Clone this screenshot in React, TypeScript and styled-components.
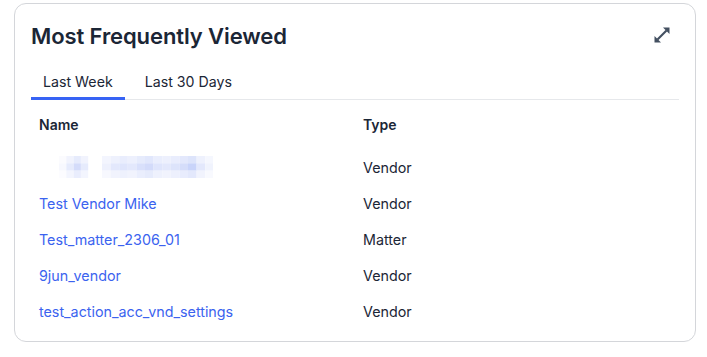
import React, { FC, useState } from 'react'
import styled, { createGlobalStyle } from 'styled-components'

const GlobalStyle = createGlobalStyle`
  html, body {
    margin: 0;
    padding: 0;
    background: #ffffff;
    font-family: Inter, "Noto Sans", Arial, sans-serif;
  }
`

const palette = {
  text: '#1b2636',
  link: '#3b63ef',
  border: '#d4d6da',
  divider: '#e6e8eb',
  accent: '#3763f4',
  icon: '#445061',
}

const Page = styled.div`
  padding: 3px 0 0 14px;
`

const Card = styled.section`
  box-sizing: border-box;
  width: 682px;
  height: 339px;
  border: 1px solid ${palette.border};
  border-radius: 12px;
  padding: 16px 16px 0 16px;
  background: #fff;
`

const Header = styled.div`
  display: flex;
  justify-content: space-between;
  align-items: center;
  height: 32px;
`

const Title = styled.h2`
  margin: 0;
  font-size: 22px;
  font-weight: 600;
  color: ${palette.text};
  letter-spacing: -0.1px;
`

const ExpandButton = styled.button`
  display: flex;
  align-items: center;
  justify-content: center;
  width: 24px;
  height: 24px;
  margin: 0 5px 3px 0;
  padding: 0;
  border: 0;
  background: transparent;
  cursor: pointer;
`

const TabList = styled.div`
  display: flex;
  gap: 8px;
  margin-top: 13px;
  border-bottom: 1px solid ${palette.divider};
`

const Tab = styled.button<{ $active: boolean }>`
  padding: 0 12px;
  height: 35px;
  border: 0;
  border-bottom: 3px solid ${(p) => (p.$active ? palette.accent : 'transparent')};
  margin-bottom: -1px;
  background: transparent;
  font-family: inherit;
  font-size: 14.2px;
  font-weight: 400;
  color: ${palette.text};
  cursor: pointer;
`

const Table = styled.table`
  width: 100%;
  border-collapse: collapse;
  table-layout: fixed;
`

const HeadCell = styled.th`
  height: 49px;
  padding: 0 8px;
  text-align: left;
  font-size: 14px;
  font-weight: 600;
  color: ${palette.text};
`

const Cell = styled.td`
  height: 36px;
  padding: 0 8px;
  font-size: 14.3px;
  color: ${palette.text};
`

const ItemLink = styled.a`
  color: ${palette.link};
  text-decoration: none;
`

const Mosaic = styled.svg`
  display: block;
  margin-left: 20px;
`

const ExpandIcon: FC = () => (
  <svg width="16" height="16" viewBox="0 0 16 16" fill={palette.icon}>
    <polygon points="9,0.5 15.5,0.5 15.5,7" />
    <polygon points="0.5,9 0.5,15.5 7,15.5" />
    <line x1="3.5" y1="12.5" x2="12.5" y2="3.5" stroke={palette.icon} strokeWidth="2.2" />
  </svg>
)

// pixelated (redacted) name in the first row
const mosaicShades = [
  ['#fbfbfe', '#f1f3fd', '#e6ebfc', '#f1f3fd', null, '#f3f5fe', '#eef1fd', '#e9edfd', '#edf0fd', '#e6ebfc', '#e1e7fc', '#eaeefd', '#edf0fd', '#e9edfd', '#e3e8fc', '#dde4fb', '#eef1fd', '#f5f7fe'],
  ['#f7f8fe', '#e6ebfc', '#d4dcfa', '#e6ebfc', null, '#eef1fd', '#e3e8fc', '#dfe5fc', '#e3e8fc', '#d9e0fb', '#d3dbfa', '#dfe5fc', '#e3e8fc', '#dde4fb', '#d5ddfa', '#c9d4fa', '#e3e8fc', '#f0f3fd'],
  ['#fcfcff', '#f3f5fe', '#e9edfd', '#f3f5fe', null, '#f7f8fe', '#f1f3fd', '#eef1fd', '#f1f3fd', '#eaeefd', '#e6ebfc', '#eef1fd', '#f1f3fd', '#edf0fd', '#e8ecfd', '#e3e8fc', '#f1f3fd', '#f8f9fe'],
]

const RedactedName: FC = () => (
  <Mosaic width="154" height="22" viewBox="0 0 154 22">
    {mosaicShades.map((row, r) =>
      row.map((c, i) => {
        if (!c) return null
        const x = i < 4 ? i * 7.3 : 43 + (i - 5) * 8.6
        const w = i < 4 ? 7.3 : 8.6
        return <rect key={`${r}-${i}`} x={x} y={r * 7.3} width={w} height={7.4} fill={c} />
      }),
    )}
  </Mosaic>
)

type Row = { name: string; type: string; redacted?: boolean }

const rows: Row[] = [
  { name: 'hidden', type: 'Vendor', redacted: true },
  { name: 'Test Vendor Mike', type: 'Vendor' },
  { name: 'Test_matter_2306_01', type: 'Matter' },
  { name: '9jun_vendor', type: 'Vendor' },
  { name: 'test_action_acc_vnd_settings', type: 'Vendor' },
]

const App: FC = () => {
  const [tab, setTab] = useState('week')

  return (
    <Page>
      <GlobalStyle />
      <Card>
        <Header>
          <Title>Most Frequently Viewed</Title>
          <ExpandButton type="button" aria-label="Expand">
            <ExpandIcon />
          </ExpandButton>
        </Header>

        <TabList>
          <Tab $active={tab === 'week'} onClick={() => setTab('week')}>
            Last Week
          </Tab>
          <Tab $active={tab === 'month'} onClick={() => setTab('month')}>
            Last 30 Days
          </Tab>
        </TabList>

        <Table>
          <thead>
            <tr>
              <HeadCell>Name</HeadCell>
              <HeadCell>Type</HeadCell>
            </tr>
          </thead>
          <tbody>
            {rows.map((row, index) => (
              <tr key={index}>
                <Cell>{row.redacted ? <RedactedName /> : <ItemLink href="#">{row.name}</ItemLink>}</Cell>
                <Cell>{row.type}</Cell>
              </tr>
            ))}
          </tbody>
        </Table>
      </Card>
    </Page>
  )
}

export default App
